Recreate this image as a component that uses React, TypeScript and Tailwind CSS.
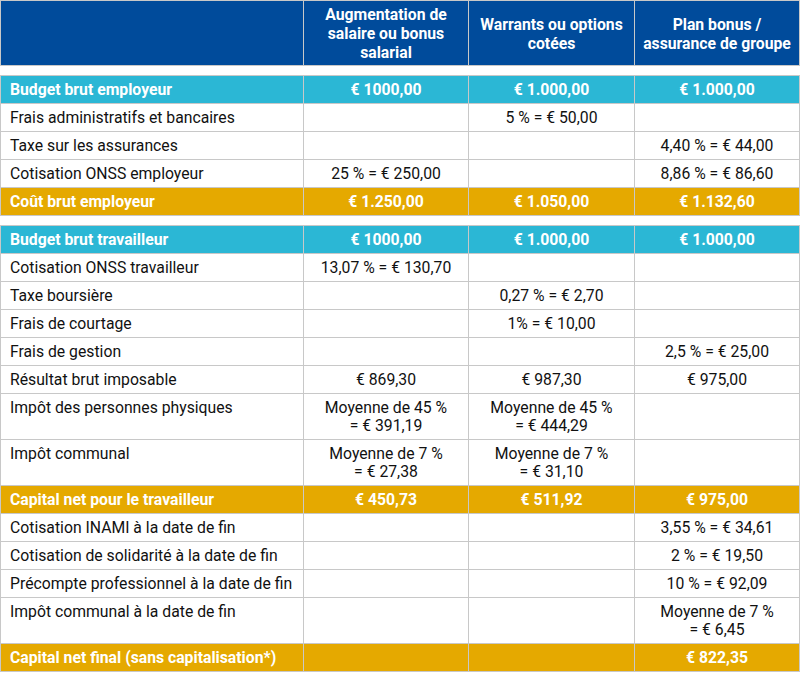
const BLUE = 'bg-[#004b9b]'

type Kind = 'cyan' | 'gold' | 'plain'

interface Row {
  kind: Kind
  label: string
  cells: string[]
}

const rowsA: Row[] = [
  { kind: 'cyan', label: 'Budget brut employeur', cells: ['€ 1000,00', '€ 1.000,00', '€ 1.000,00'] },
  { kind: 'plain', label: 'Frais administratifs et bancaires', cells: ['', '5 % = € 50,00', ''] },
  { kind: 'plain', label: 'Taxe sur les assurances', cells: ['', '', '4,40 % = € 44,00'] },
  { kind: 'plain', label: 'Cotisation ONSS employeur', cells: ['25 % = € 250,00', '', '8,86 % = € 86,60'] },
  { kind: 'gold', label: 'Coût brut employeur', cells: ['€ 1.250,00', '€ 1.050,00', '€ 1.132,60'] },
]

const rowsB: Row[] = [
  { kind: 'cyan', label: 'Budget brut travailleur', cells: ['€ 1000,00', '€ 1.000,00', '€ 1.000,00'] },
  { kind: 'plain', label: 'Cotisation ONSS travailleur', cells: ['13,07 % = € 130,70', '', ''] },
  { kind: 'plain', label: 'Taxe boursière', cells: ['', '0,27 % = € 2,70', ''] },
  { kind: 'plain', label: 'Frais de courtage', cells: ['', '1% = € 10,00', ''] },
  { kind: 'plain', label: 'Frais de gestion', cells: ['', '', '2,5 % = € 25,00'] },
  { kind: 'plain', label: 'Résultat brut imposable', cells: ['€ 869,30', '€ 987,30', '€ 975,00'] },
  { kind: 'plain', label: 'Impôt des personnes physiques', cells: ['Moyenne de 45 %\n= € 391,19', 'Moyenne de 45 %\n= € 444,29', ''] },
  { kind: 'plain', label: 'Impôt communal', cells: ['Moyenne de 7 %\n= € 27,38', 'Moyenne de 7 %\n= € 31,10', ''] },
  { kind: 'gold', label: 'Capital net pour le travailleur', cells: ['€ 450,73', '€ 511,92', '€ 975,00'] },
  { kind: 'plain', label: 'Cotisation INAMI à la date de fin', cells: ['', '', '3,55 % = € 34,61'] },
  { kind: 'plain', label: 'Cotisation de solidarité à la date de fin', cells: ['', '', '2 % = € 19,50'] },
  { kind: 'plain', label: 'Précompte professionnel à la date de fin', cells: ['', '', '10 % = € 92,09'] },
  { kind: 'plain', label: 'Impôt communal à la date de fin', cells: ['', '', 'Moyenne de 7 %\n= € 6,45'] },
  { kind: 'gold', label: 'Capital net final (sans capitalisation*)', cells: ['', '', '€ 822,35'] },
]

const rowBg: Record<Kind, string> = {
  cyan: 'bg-[#2bb7d5] text-white font-bold',
  gold: 'bg-[#e5a900] text-white font-bold',
  plain: 'bg-white text-[#111] font-normal',
}

function BodyRow({ row }: { row: Row }) {
  return (
    <tr className={rowBg[row.kind]}>
      <td className="border border-[#c8c8c8] pl-[9px] pr-[6px] pt-[5px] pb-[4px] align-top text-left whitespace-nowrap">
        {row.label}
      </td>
      {row.cells.map((c, i) => (
        <td key={i} className="border border-[#c8c8c8] px-[6px] pt-[5px] pb-[4px] align-top text-center whitespace-pre-line">
          {c}
        </td>
      ))}
    </tr>
  )
}

function Spacer() {
  return (
    <tr>
      <td colSpan={4} className="h-[10px] p-0 border-x-0" />
    </tr>
  )
}

export default function App() {
  return (
    <div className="w-[800px] h-[677px] bg-white font-['Roboto',sans-serif] text-[15.75px] leading-[18px]">
      <table className="w-[799px] border-collapse table-fixed">
        <colgroup>
          <col className="w-[303px]" />
          <col className="w-[165px]" />
          <col className="w-[166px]" />
          <col className="w-[165px]" />
        </colgroup>
        <thead>
          <tr className={`${BLUE} text-white font-bold leading-[19px]`}>
            <th className="border border-[#c8c8c8] p-[3px]" />
            <th className="border border-[#c8c8c8] px-[4px] pt-[4px] pb-[3px] align-middle text-center">
              Augmentation de salaire ou bonus salarial
            </th>
            <th className="border border-[#c8c8c8] px-[4px] pt-[4px] pb-[3px] align-middle text-center">
              Warrants ou options cotées
            </th>
            <th className="border border-[#c8c8c8] px-[4px] pt-[4px] pb-[3px] align-middle text-center">
              Plan bonus / assurance de groupe
            </th>
          </tr>
        </thead>
        <tbody>
          <Spacer />
          {rowsA.map((r, i) => (
            <BodyRow key={i} row={r} />
          ))}
          <Spacer />
          {rowsB.map((r, i) => (
            <BodyRow key={i} row={r} />
          ))}
        </tbody>
      </table>
    </div>
  )
}
